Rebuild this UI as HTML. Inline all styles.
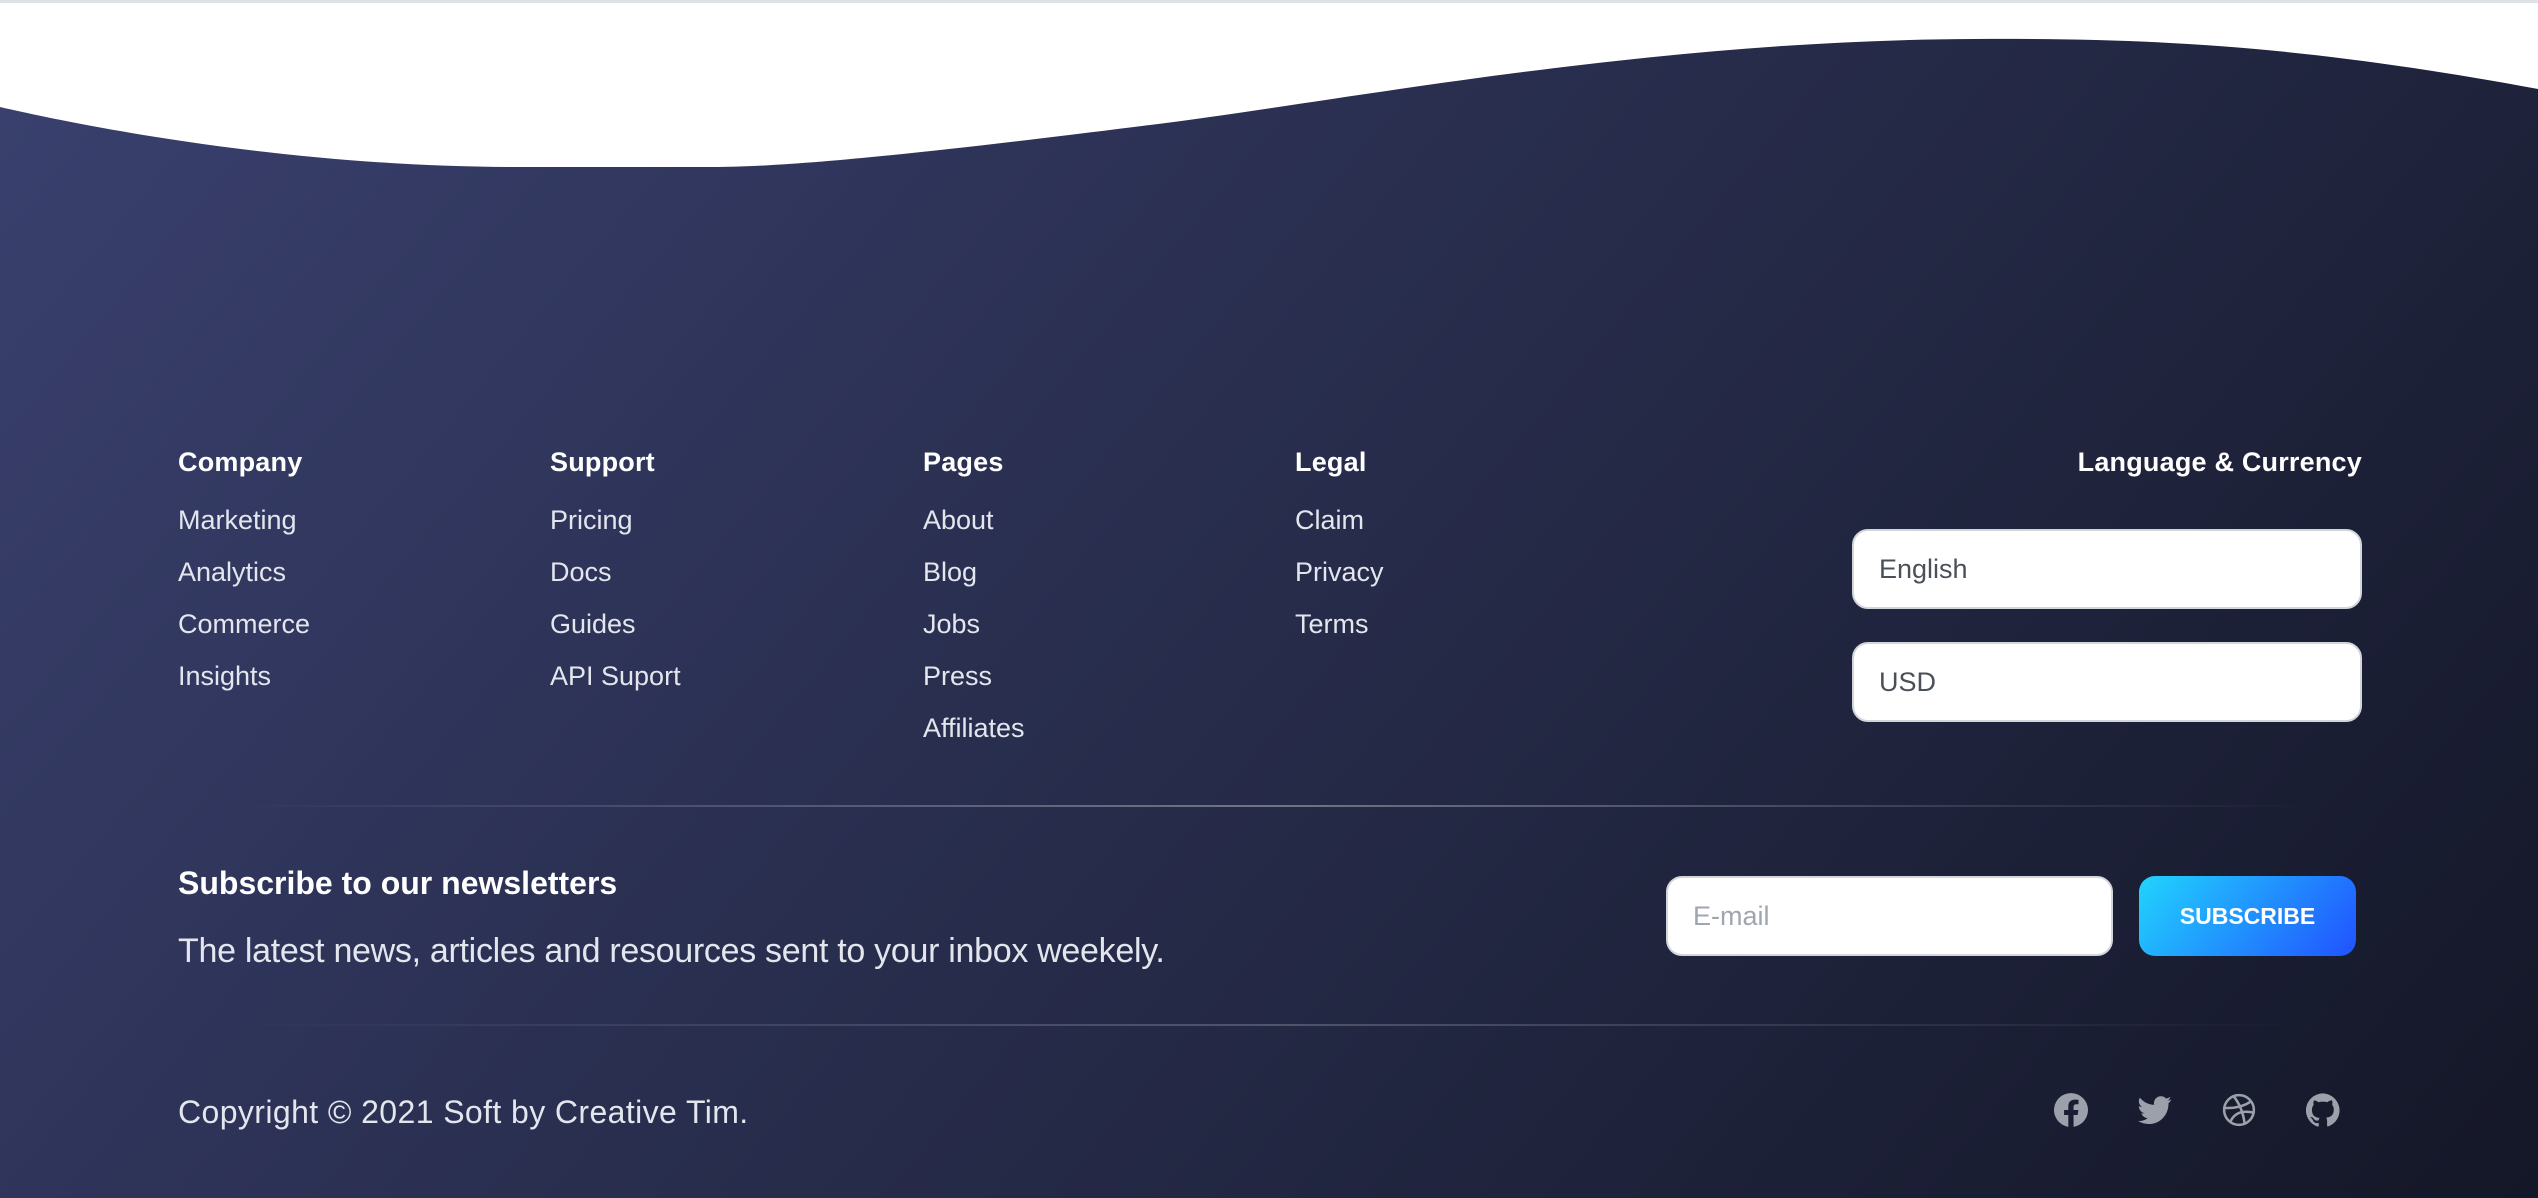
<!DOCTYPE html>
<html><head><meta charset="utf-8"><style>
*{margin:0;padding:0;box-sizing:border-box}
body{width:2538px;height:1198px;overflow:hidden;position:relative;font-family:"Liberation Sans",sans-serif;background:linear-gradient(310deg,#141727 0%,#3a416f 100%);}
.t{position:absolute;white-space:nowrap;line-height:1}
.h{color:#fff;font-size:27px;font-weight:bold;letter-spacing:0.2px}
.l{color:#e4e6ee;font-size:27px;letter-spacing:0px}
.box{position:absolute;background:#fff;border:2px solid #d2d6da;border-radius:16px;font-size:27px;color:#495057;padding-left:25px;display:flex;align-items:center}
.hr{position:absolute;left:227px;width:2088px;height:2px;background:linear-gradient(90deg,rgba(255,255,255,0),rgba(255,255,255,.35),rgba(255,255,255,0))}
.ic{position:absolute;top:1093px;width:34px;height:34px}
</style></head><body>
<svg style="position:absolute;left:0;top:0" width="2538" height="170" viewBox="0 0 2538 170">
<path d="M0 0H2538V89C2300 45 2150 38 1975 39C1650 40 1350 100 1150 125C950 150 800 167 712 167H518C300 167 100 130 0 107Z" fill="#fff"/>
<rect x="0" y="0" width="2538" height="3" fill="#dee2e6"/>
</svg>
<div class="t h" style="left:178px;top:449px">Company</div>
<div class="t h" style="left:550px;top:449px">Support</div>
<div class="t h" style="left:923px;top:449px">Pages</div>
<div class="t h" style="left:1295px;top:449px">Legal</div>
<div class="t h" style="right:176px;top:449px">Language &amp; Currency</div>
<div class="t l" style="left:178px;top:507px">Marketing</div>
<div class="t l" style="left:178px;top:559px">Analytics</div>
<div class="t l" style="left:178px;top:611px">Commerce</div>
<div class="t l" style="left:178px;top:663px">Insights</div>
<div class="t l" style="left:550px;top:507px">Pricing</div>
<div class="t l" style="left:550px;top:559px">Docs</div>
<div class="t l" style="left:550px;top:611px">Guides</div>
<div class="t l" style="left:550px;top:663px">API Suport</div>
<div class="t l" style="left:923px;top:507px">About</div>
<div class="t l" style="left:923px;top:559px">Blog</div>
<div class="t l" style="left:923px;top:611px">Jobs</div>
<div class="t l" style="left:923px;top:663px">Press</div>
<div class="t l" style="left:923px;top:715px">Affiliates</div>
<div class="t l" style="left:1295px;top:507px">Claim</div>
<div class="t l" style="left:1295px;top:559px">Privacy</div>
<div class="t l" style="left:1295px;top:611px">Terms</div>
<div class="box" style="left:1852px;top:529px;width:510px;height:80px">English</div>
<div class="box" style="left:1852px;top:642px;width:510px;height:80px">USD</div>
<div class="hr" style="top:805px"></div>
<div class="t" style="left:178px;top:867px;color:#fff;font-size:32px;font-weight:bold;letter-spacing:0px">Subscribe to our newsletters</div>
<div class="t" style="left:178px;top:934px;color:#e4e6ee;font-size:34px;letter-spacing:-0.3px">The latest news, articles and resources sent to your inbox weekely.</div>
<div class="box" style="left:1666px;top:876px;width:447px;height:80px;color:#a0a6b0">E-mail</div>
<div style="position:absolute;left:2139px;top:876px;width:217px;height:80px;border-radius:16px;background:linear-gradient(310deg,#2152ff,#21d4fd);color:#fff;font-weight:bold;font-size:23px;display:flex;align-items:center;justify-content:center">SUBSCRIBE</div>
<div class="hr" style="top:1024px;opacity:.6"></div>
<div class="t" style="left:178px;top:1096px;color:#e4e6ee;font-size:32px;letter-spacing:0.4px">Copyright © 2021 Soft by Creative Tim.</div>
<svg class="ic" style="left:2054px" viewBox="0 0 24 24"><path fill="#9ca0aa" d="M24 12a12 12 0 1 0-13.9 11.9v-8.4H7.1V12h3V9.4c0-3 1.8-4.7 4.5-4.7 1.3 0 2.7.2 2.7.2v3h-1.5c-1.5 0-2 .9-2 1.9V12h3.4l-.5 3.5h-2.9v8.4A12 12 0 0 0 24 12z"/></svg>
<svg class="ic" style="left:2138px" viewBox="0 0 24 24"><path fill="#9ca0aa" d="M23.6 4.6a9.7 9.7 0 0 1-2.8.8 4.9 4.9 0 0 0 2.1-2.7 9.8 9.8 0 0 1-3.1 1.2 4.9 4.9 0 0 0-8.4 4.5A14 14 0 0 1 1.3 3.3a4.9 4.9 0 0 0 1.5 6.6 4.9 4.9 0 0 1-2.2-.6v.1a4.9 4.9 0 0 0 3.9 4.8 4.9 4.9 0 0 1-2.2.1 4.9 4.9 0 0 0 4.6 3.4A9.9 9.9 0 0 1 0 19.7a14 14 0 0 0 7.5 2.2c9.1 0 14-7.5 14-14v-.6a10 10 0 0 0 2.1-2.7z"/></svg>
<svg class="ic" style="left:2222px" viewBox="0 0 24 24" fill="none" stroke="#9ca0aa" stroke-width="1.8"><circle cx="12" cy="12" r="10.5"/><path d="M2 10.5c6 .5 14-1 19-5M6 20c3-6 8-8 17-6M8 2c4 5 7 11 8 20"/></svg>
<svg class="ic" style="left:2306px" viewBox="0 0 24 24"><path fill="#9ca0aa" d="M12 .3a12 12 0 0 0-3.8 23.4c.6.1.8-.3.8-.6v-2c-3.3.7-4-1.6-4-1.6-.6-1.4-1.4-1.8-1.4-1.8-1-.7.1-.7.1-.7 1.2.1 1.8 1.2 1.8 1.2 1 1.8 2.8 1.3 3.5 1 0-.8.4-1.3.7-1.6-2.7-.3-5.5-1.3-5.5-5.9 0-1.3.5-2.4 1.2-3.2 0-.3-.5-1.5.2-3.2 0 0 1-.3 3.3 1.2a11.5 11.5 0 0 1 6 0C17.3 4.9 18.3 5.2 18.3 5.2c.7 1.700.2 2.9.1 3.2.8.8 1.2 1.9 1.2 3.2 0 4.6-2.8 5.6-5.5 5.9.4.4.8 1.1.8 2.2v3.3c0 .3.2.7.8.6A12 12 0 0 0 12 .3"/></svg>
</body></html>
